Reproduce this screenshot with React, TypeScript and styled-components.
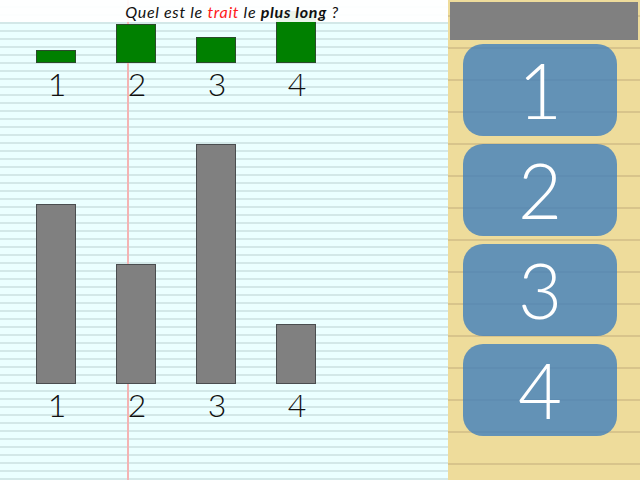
import React from "react"
import styled, { createGlobalStyle } from "styled-components"

const GlobalStyle = createGlobalStyle`
  html, body {
    margin: 0;
    padding: 0;
    background: #ffffff;
  }
  body {
    font-family: Lato, "DejaVu Sans", sans-serif;
  }
`

const Screen = styled.div`
  display: grid;
  grid-template-columns: 448px 192px;
  width: 640px;
  height: 480px;
  overflow: hidden;
`

const Paper = styled.div`
  display: flex;
  flex-direction: column;
  background-color: #ebffff;
  background-image: linear-gradient(
      to right,
      transparent 127px,
      #f4b4b4 127px 129px,
      transparent 129px
    ),
    repeating-linear-gradient(
      to bottom,
      transparent 0 6px,
      #d3e8e8 6px 8px
    );
`

const Question = styled.div`
  position: relative;
  z-index: 1;
  height: 22px;
  padding-left: 16px;
  display: flex;
  align-items: center;
  justify-content: center;
  background: rgba(255, 255, 255, 0.92);
  font-style: italic;
  font-size: 16px;
  letter-spacing: 0.7px;
  color: #111;
`

const Red = styled.span`
  color: #ff1a1a;
`

const Strong = styled.b`
  font-weight: 700;
`

const Chart = styled.div<{ $top: number }>`
  display: flex;
  padding-left: 16px;
  margin-top: ${({ $top }) => $top}px;
`

const Column = styled.div`
  width: 80px;
  display: flex;
  flex-direction: column;
  align-items: center;
`

const BarSlot = styled.div<{ $h: number }>`
  height: ${({ $h }) => $h}px;
  display: flex;
  flex-direction: column;
  justify-content: flex-end;
`

const Bar = styled.div<{ $green?: boolean }>`
  width: 40px;
  flex-shrink: 0;
  box-sizing: border-box;
  background: ${({ $green }) => ($green ? "#008000" : "#808080")};
  border: 1px solid ${({ $green }) => ($green ? "#2c4a2c" : "#4a4d4f")};
`

const Label = styled.div`
  margin-top: 3px;
  padding-left: 2px;
  font-size: 32px;
  line-height: 36px;
  font-weight: 300;
  color: #111;
`

const Side = styled.div`
  display: flex;
  flex-direction: column;
  padding: 2px;
  background-color: #eedc9b;
  background-image: repeating-linear-gradient(
    to bottom,
    transparent 0 15px,
    #d8c48b 15px 17px,
    transparent 17px 32px
  );
`

const Answer = styled.div`
  height: 38px;
  background: #808080;
`

const Choices = styled.div`
  display: flex;
  flex-direction: column;
  gap: 8px;
  margin-top: 4px;
  padding-left: 13px;
`

const Choice = styled.button`
  width: 154px;
  height: 92px;
  border: none;
  border-radius: 20px;
  padding: 0;
  background: rgba(60, 125, 190, 0.78);
  color: #ffffff;
  font-family: Lato, "DejaVu Sans", sans-serif;
  font-size: 76px;
  font-weight: 300;
  line-height: 1;
  cursor: pointer;
`

const small = [13, 39, 26, 52]
const big = [180, 120, 240, 60]

export default function App() {
  return (
    <>
      <GlobalStyle />
      <Screen>
        <Paper>
          <Question>
            Quel est le&nbsp;<Red>trait</Red>&nbsp;le&nbsp;<Strong>plus long</Strong>&nbsp;?
          </Question>
          <Chart $top={0}>
            {small.map((h, i) => (
              <Column key={i}>
                <BarSlot $h={41}>
                  <Bar $green style={{ height: h }} />
                </BarSlot>
                <Label>{i + 1}</Label>
              </Column>
            ))}
          </Chart>
          <Chart $top={42}>
            {big.map((h, i) => (
              <Column key={i}>
                <BarSlot $h={240}>
                  <Bar style={{ height: h }} />
                </BarSlot>
                <Label>{i + 1}</Label>
              </Column>
            ))}
          </Chart>
        </Paper>
        <Side>
          <Answer />
          <Choices>
            {[1, 2, 3, 4].map((n) => (
              <Choice key={n}>{n}</Choice>
            ))}
          </Choices>
        </Side>
      </Screen>
    </>
  )
}
